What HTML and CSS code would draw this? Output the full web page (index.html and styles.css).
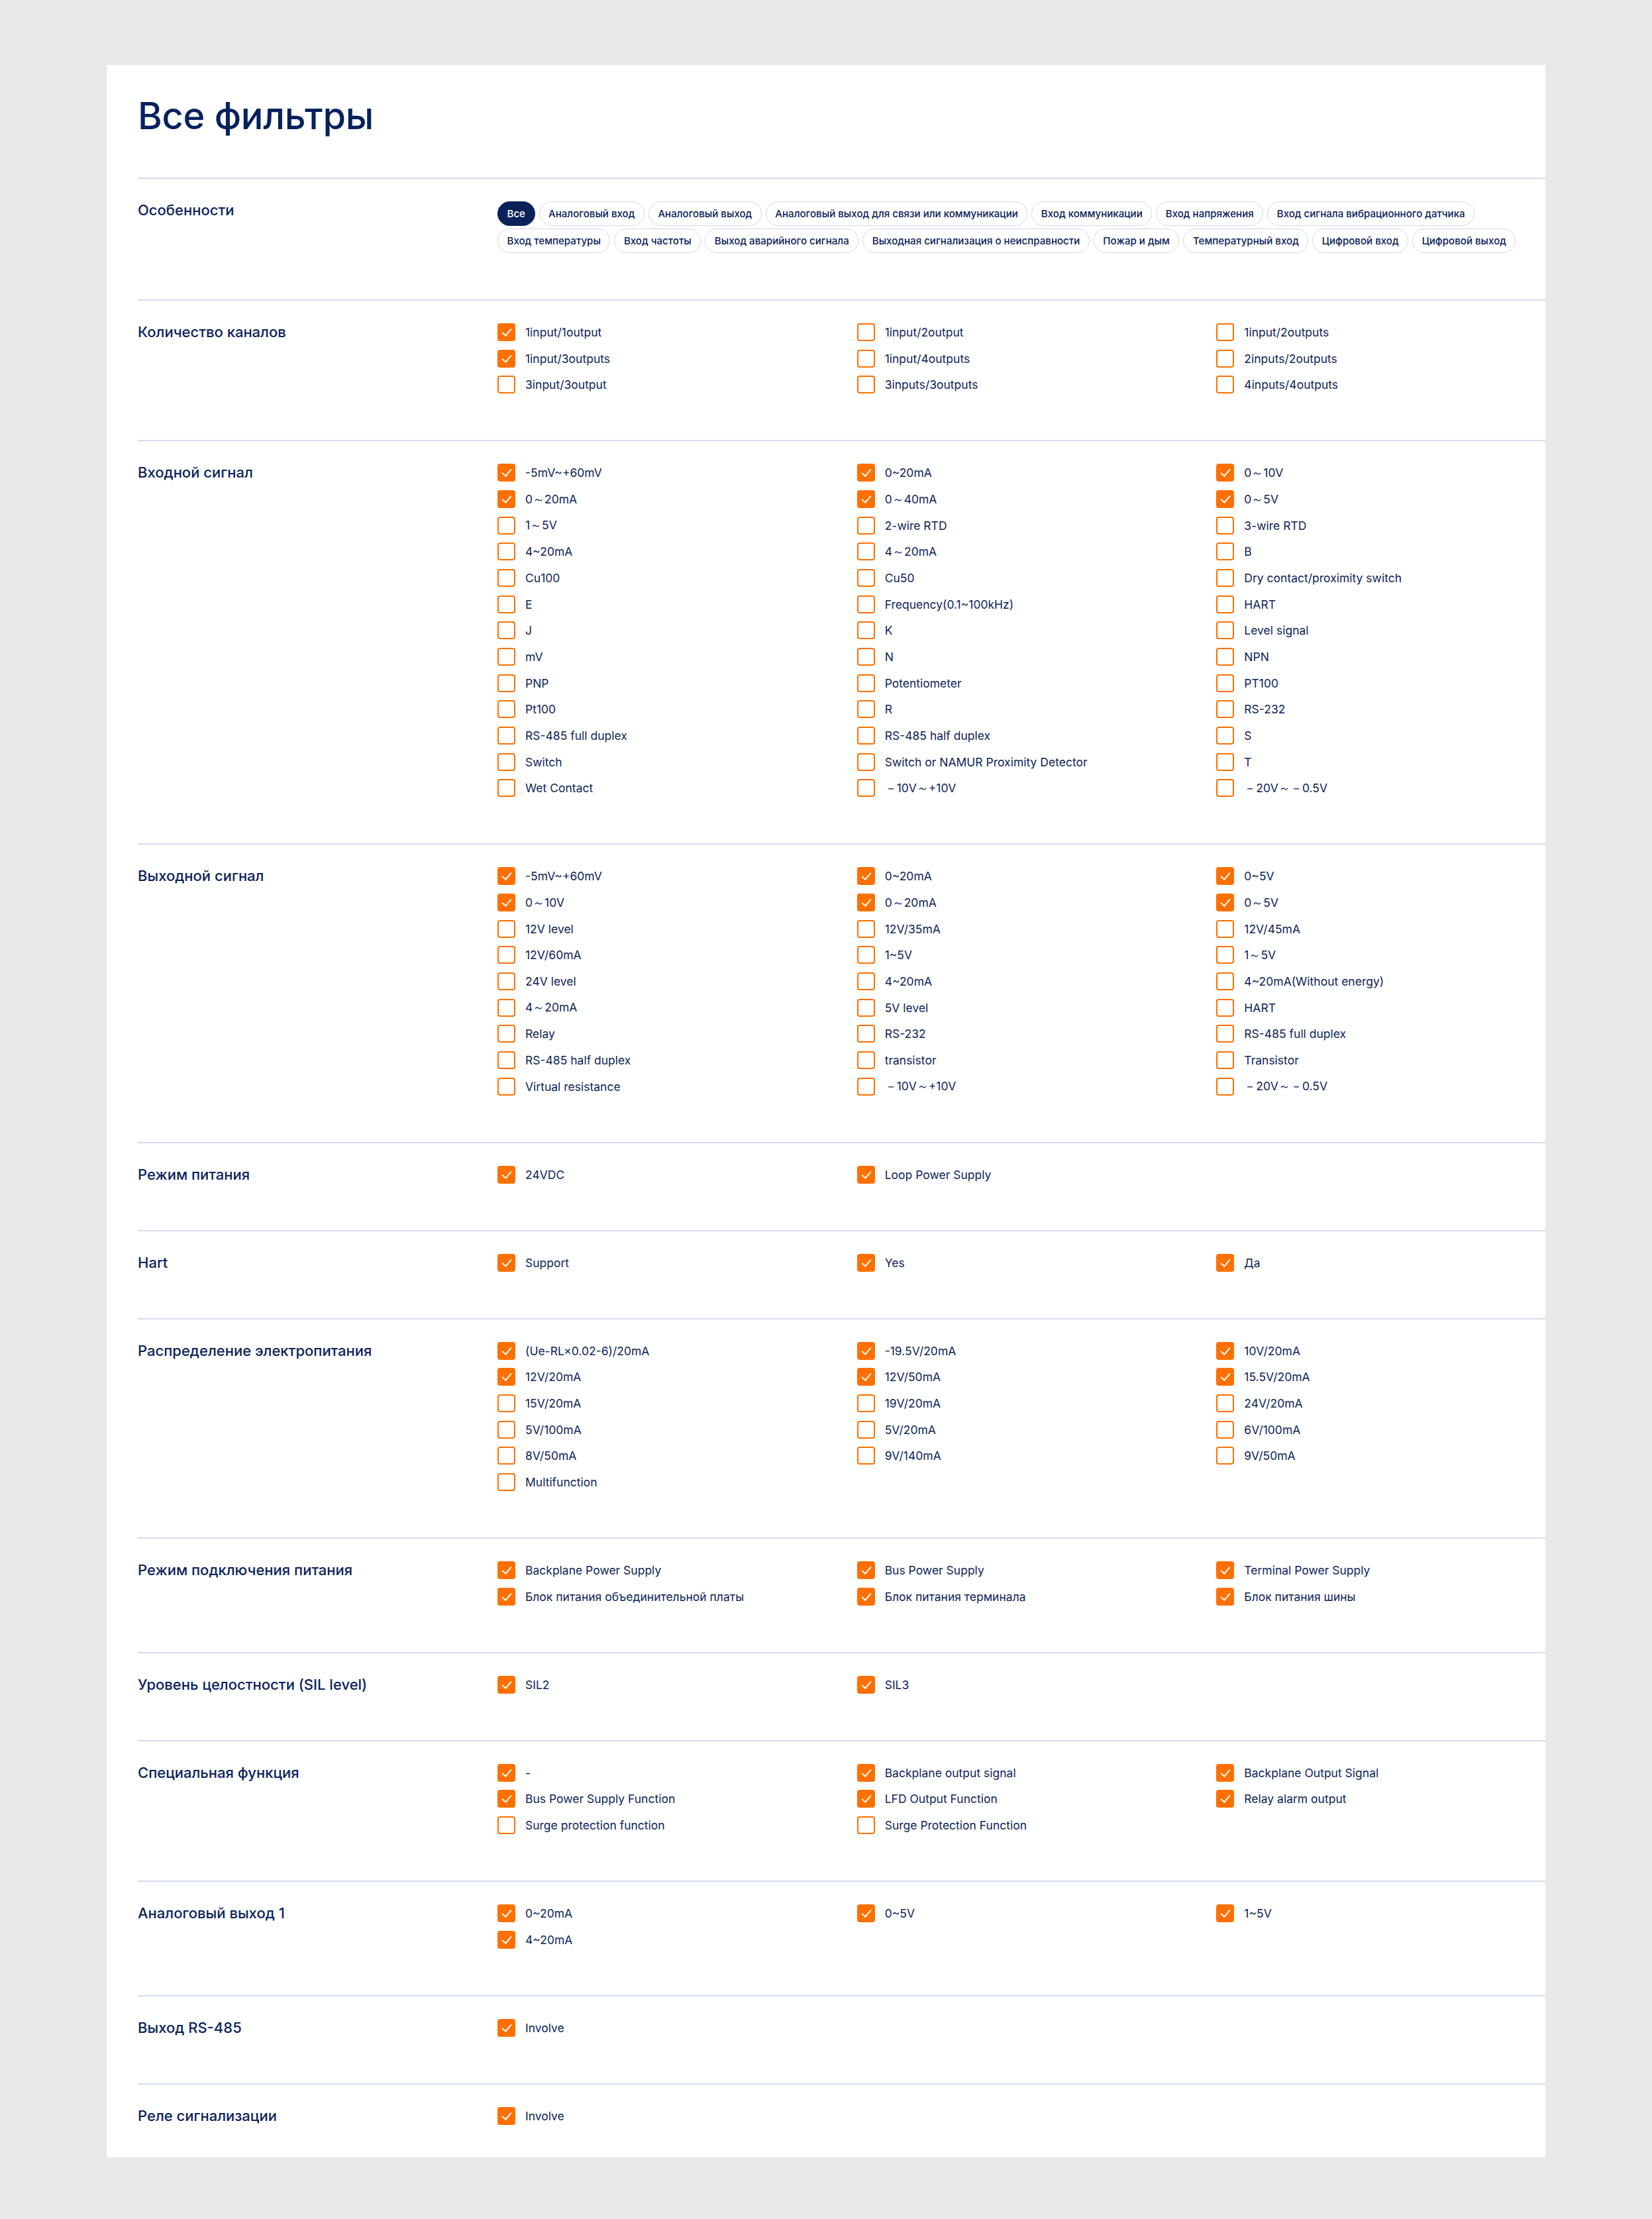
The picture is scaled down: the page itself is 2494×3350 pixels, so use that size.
FILE: index.html
```html
<!DOCTYPE html>
<html lang="ru">
<head>
<meta charset="UTF-8">
<meta name="viewport" content="width=device-width, initial-scale=1.0">
<title>Все фильтры</title>
<link rel="stylesheet" href="styles.css">
</head>
<body>
<div class="card">
    <h1 class="title">Все фильтры</h1>

    <div class="section">
        <div class="label">Особенности</div>
        <div class="chips">
            <span class="chip active">Все</span>
            <span class="chip">Аналоговый вход</span>
            <span class="chip">Аналоговый выход</span>
            <span class="chip">Аналоговый выход для связи или коммуникации</span>
            <span class="chip">Вход коммуникации</span>
            <span class="chip">Вход напряжения</span>
            <span class="chip">Вход сигнала вибрационного датчика</span>
            <span class="chip">Вход температуры</span>
            <span class="chip">Вход частоты</span>
            <span class="chip">Выход аварийного сигнала</span>
            <span class="chip">Выходная сигнализация о неисправности</span>
            <span class="chip">Пожар и дым</span>
            <span class="chip">Температурный вход</span>
            <span class="chip">Цифровой вход</span>
            <span class="chip">Цифровой выход</span>
        </div>
    </div>

    <div class="section">
        <div class="label">Количество каналов</div>
        <div class="options">
            <label class="option"><span class="box checked"></span>1input/1output</label>
            <label class="option"><span class="box"></span>1input/2output</label>
            <label class="option"><span class="box"></span>1input/2outputs</label>
            <label class="option"><span class="box checked"></span>1input/3outputs</label>
            <label class="option"><span class="box"></span>1input/4outputs</label>
            <label class="option"><span class="box"></span>2inputs/2outputs</label>
            <label class="option"><span class="box"></span>3input/3output</label>
            <label class="option"><span class="box"></span>3inputs/3outputs</label>
            <label class="option"><span class="box"></span>4inputs/4outputs</label>
        </div>
    </div>

    <div class="section">
        <div class="label">Входной сигнал</div>
        <div class="options">
            <label class="option"><span class="box checked"></span>-5mV~+60mV</label>
            <label class="option"><span class="box checked"></span>0~20mA</label>
            <label class="option"><span class="box checked"></span>0～10V</label>
            <label class="option"><span class="box checked"></span>0～20mA</label>
            <label class="option"><span class="box checked"></span>0～40mA</label>
            <label class="option"><span class="box checked"></span>0～5V</label>
            <label class="option"><span class="box"></span>1～5V</label>
            <label class="option"><span class="box"></span>2-wire RTD</label>
            <label class="option"><span class="box"></span>3-wire RTD</label>
            <label class="option"><span class="box"></span>4~20mA</label>
            <label class="option"><span class="box"></span>4～20mA</label>
            <label class="option"><span class="box"></span>B</label>
            <label class="option"><span class="box"></span>Cu100</label>
            <label class="option"><span class="box"></span>Cu50</label>
            <label class="option"><span class="box"></span>Dry contact/proximity switch</label>
            <label class="option"><span class="box"></span>E</label>
            <label class="option"><span class="box"></span>Frequency(0.1~100kHz)</label>
            <label class="option"><span class="box"></span>HART</label>
            <label class="option"><span class="box"></span>J</label>
            <label class="option"><span class="box"></span>K</label>
            <label class="option"><span class="box"></span>Level signal</label>
            <label class="option"><span class="box"></span>mV</label>
            <label class="option"><span class="box"></span>N</label>
            <label class="option"><span class="box"></span>NPN</label>
            <label class="option"><span class="box"></span>PNP</label>
            <label class="option"><span class="box"></span>Potentiometer</label>
            <label class="option"><span class="box"></span>PT100</label>
            <label class="option"><span class="box"></span>Pt100</label>
            <label class="option"><span class="box"></span>R</label>
            <label class="option"><span class="box"></span>RS-232</label>
            <label class="option"><span class="box"></span>RS-485 full duplex</label>
            <label class="option"><span class="box"></span>RS-485 half duplex</label>
            <label class="option"><span class="box"></span>S</label>
            <label class="option"><span class="box"></span>Switch</label>
            <label class="option"><span class="box"></span>Switch or NAMUR Proximity Detector</label>
            <label class="option"><span class="box"></span>T</label>
            <label class="option"><span class="box"></span>Wet Contact</label>
            <label class="option"><span class="box"></span>－10V～+10V</label>
            <label class="option"><span class="box"></span>－20V～－0.5V</label>
        </div>
    </div>

    <div class="section">
        <div class="label">Выходной сигнал</div>
        <div class="options">
            <label class="option"><span class="box checked"></span>-5mV~+60mV</label>
            <label class="option"><span class="box checked"></span>0~20mA</label>
            <label class="option"><span class="box checked"></span>0~5V</label>
            <label class="option"><span class="box checked"></span>0～10V</label>
            <label class="option"><span class="box checked"></span>0～20mA</label>
            <label class="option"><span class="box checked"></span>0～5V</label>
            <label class="option"><span class="box"></span>12V level</label>
            <label class="option"><span class="box"></span>12V/35mA</label>
            <label class="option"><span class="box"></span>12V/45mA</label>
            <label class="option"><span class="box"></span>12V/60mA</label>
            <label class="option"><span class="box"></span>1~5V</label>
            <label class="option"><span class="box"></span>1～5V</label>
            <label class="option"><span class="box"></span>24V level</label>
            <label class="option"><span class="box"></span>4~20mA</label>
            <label class="option"><span class="box"></span>4~20mA(Without energy)</label>
            <label class="option"><span class="box"></span>4～20mA</label>
            <label class="option"><span class="box"></span>5V level</label>
            <label class="option"><span class="box"></span>HART</label>
            <label class="option"><span class="box"></span>Relay</label>
            <label class="option"><span class="box"></span>RS-232</label>
            <label class="option"><span class="box"></span>RS-485 full duplex</label>
            <label class="option"><span class="box"></span>RS-485 half duplex</label>
            <label class="option"><span class="box"></span>transistor</label>
            <label class="option"><span class="box"></span>Transistor</label>
            <label class="option"><span class="box"></span>Virtual resistance</label>
            <label class="option"><span class="box"></span>－10V～+10V</label>
            <label class="option"><span class="box"></span>－20V～－0.5V</label>
        </div>
    </div>

    <div class="section">
        <div class="label">Режим питания</div>
        <div class="options">
            <label class="option"><span class="box checked"></span>24VDC</label>
            <label class="option"><span class="box checked"></span>Loop Power Supply</label>
        </div>
    </div>

    <div class="section">
        <div class="label">Hart</div>
        <div class="options">
            <label class="option"><span class="box checked"></span>Support</label>
            <label class="option"><span class="box checked"></span>Yes</label>
            <label class="option"><span class="box checked"></span>Да</label>
        </div>
    </div>

    <div class="section">
        <div class="label">Распределение электропитания</div>
        <div class="options">
            <label class="option"><span class="box checked"></span>(Ue-RL×0.02-6)/20mA</label>
            <label class="option"><span class="box checked"></span>-19.5V/20mA</label>
            <label class="option"><span class="box checked"></span>10V/20mA</label>
            <label class="option"><span class="box checked"></span>12V/20mA</label>
            <label class="option"><span class="box checked"></span>12V/50mA</label>
            <label class="option"><span class="box checked"></span>15.5V/20mA</label>
            <label class="option"><span class="box"></span>15V/20mA</label>
            <label class="option"><span class="box"></span>19V/20mA</label>
            <label class="option"><span class="box"></span>24V/20mA</label>
            <label class="option"><span class="box"></span>5V/100mA</label>
            <label class="option"><span class="box"></span>5V/20mA</label>
            <label class="option"><span class="box"></span>6V/100mA</label>
            <label class="option"><span class="box"></span>8V/50mA</label>
            <label class="option"><span class="box"></span>9V/140mA</label>
            <label class="option"><span class="box"></span>9V/50mA</label>
            <label class="option"><span class="box"></span>Multifunction</label>
        </div>
    </div>

    <div class="section">
        <div class="label">Режим подключения питания</div>
        <div class="options">
            <label class="option"><span class="box checked"></span>Backplane Power Supply</label>
            <label class="option"><span class="box checked"></span>Bus Power Supply</label>
            <label class="option"><span class="box checked"></span>Terminal Power Supply</label>
            <label class="option"><span class="box checked"></span>Блок питания объединительной платы</label>
            <label class="option"><span class="box checked"></span>Блок питания терминала</label>
            <label class="option"><span class="box checked"></span>Блок питания шины</label>
        </div>
    </div>

    <div class="section">
        <div class="label">Уровень целостности (SIL level)</div>
        <div class="options">
            <label class="option"><span class="box checked"></span>SIL2</label>
            <label class="option"><span class="box checked"></span>SIL3</label>
        </div>
    </div>

    <div class="section">
        <div class="label">Специальная функция</div>
        <div class="options">
            <label class="option"><span class="box checked"></span>-</label>
            <label class="option"><span class="box checked"></span>Backplane output signal</label>
            <label class="option"><span class="box checked"></span>Backplane Output Signal</label>
            <label class="option"><span class="box checked"></span>Bus Power Supply Function</label>
            <label class="option"><span class="box checked"></span>LFD Output Function</label>
            <label class="option"><span class="box checked"></span>Relay alarm output</label>
            <label class="option"><span class="box"></span>Surge protection function</label>
            <label class="option"><span class="box"></span>Surge Protection Function</label>
        </div>
    </div>

    <div class="section">
        <div class="label">Аналоговый выход 1</div>
        <div class="options">
            <label class="option"><span class="box checked"></span>0~20mA</label>
            <label class="option"><span class="box checked"></span>0~5V</label>
            <label class="option"><span class="box checked"></span>1~5V</label>
            <label class="option"><span class="box checked"></span>4~20mA</label>
        </div>
    </div>

    <div class="section">
        <div class="label">Выход RS-485</div>
        <div class="options">
            <label class="option"><span class="box checked"></span>Involve</label>
        </div>
    </div>

    <div class="section">
        <div class="label">Реле сигнализации</div>
        <div class="options">
            <label class="option"><span class="box checked"></span>Involve</label>
        </div>
    </div>
</div>
</body>
</html>
```

FILE: styles.css
```css
html {
    background-color: #e8e8e8;
}

body {
    font-family: Inter, "Noto Sans", sans-serif;
    color: #0d2457;
    margin: 0;
    padding: 98px 0 93px;
}

.card {
    width: 2172px;
    margin: 0 auto;
    background-color: #fff;
    padding: 44px 0 0 47px;
    box-sizing: border-box;
}

.title {
    margin: 0 0 60px;
    font-size: 56px;
    line-height: 66px;
    font-weight: 500;
    color: #06215c;
    letter-spacing: -0.3px;
}

.section {
    display: grid;
    grid-template-columns: 543px 1fr;
    border-top: 2px solid #d8dbef;
    padding: 34px 0 70px;
}

.section:last-child {
    padding-bottom: 49px;
}

.label {
    font-size: 22px;
    line-height: 27px;
    font-weight: 500;
    color: #0a2259;
}

.chips {
    display: flex;
    flex-wrap: wrap;
    gap: 4px 6px;
}

.chip {
    display: inline-flex;
    align-items: center;
    height: 37px;
    padding: 0 13.5px;
    border: 1.5px solid #d3d6ee;
    border-radius: 19px;
    box-sizing: border-box;
    font-size: 15.1px;
    font-weight: 500;
    color: #0a2259;
    white-space: nowrap;
}

.chip.active {
    background-color: #0a2259;
    border-color: #0a2259;
    color: #fff;
}

.options {
    display: grid;
    grid-template-columns: repeat(3, 1fr);
    column-gap: 46px;
    row-gap: 12.68px;
}

.option {
    display: flex;
    align-items: center;
    gap: 15px;
    height: 27px;
    font-size: 17.5px;
    color: #0d2457;
    white-space: nowrap;
}

.box {
    position: relative;
    flex: none;
    width: 27px;
    height: 27px;
    border: 2px solid #ff7000;
    border-radius: 4px;
    box-sizing: border-box;
}

.box.checked {
    background-color: #ff7000;
}

.box.checked::after {
    content: "";
    position: absolute;
    left: 8px;
    top: 3px;
    width: 6px;
    height: 12px;
    border-right: 2.5px solid #fff;
    border-bottom: 2.5px solid #fff;
    transform: rotate(40deg);
}
```
